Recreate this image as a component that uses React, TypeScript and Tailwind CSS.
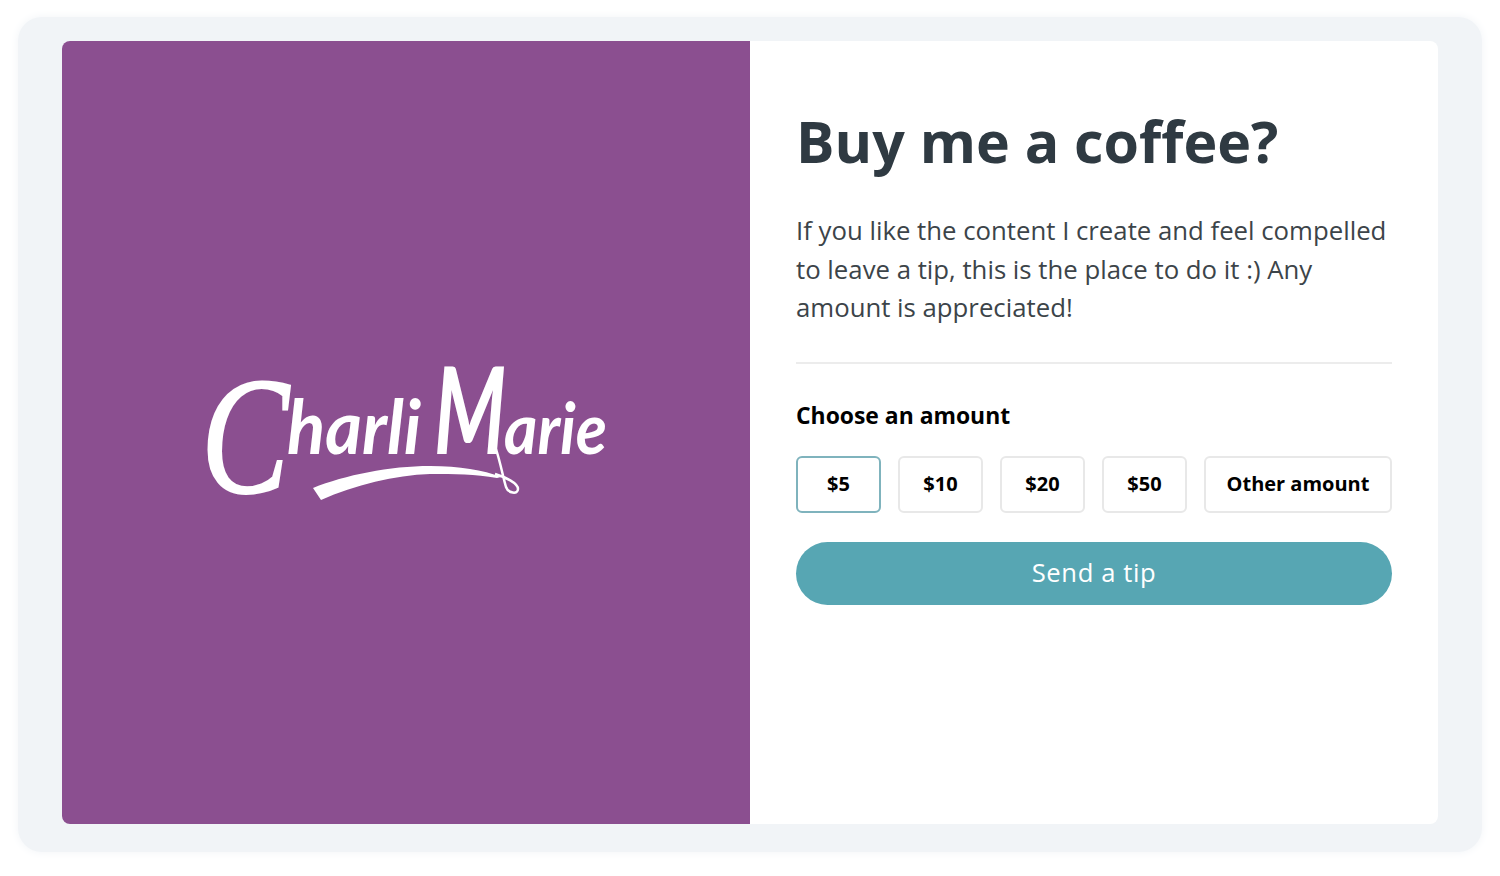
const amounts = ['$5', '$10', '$20', '$50'];

function Logo() {
  return (
    <svg width="402" height="220" viewBox="0 -42 402 220" fill="#fff" aria-label="Charli Marie">
      <text x="-4" y="127" fontSize="168" textLength="88" lengthAdjust="spacingAndGlyphs" stroke="#fff" strokeWidth="2" className="italic font-['Liberation_Serif',serif]">C</text>
      <text x="82" y="89" fontSize="74" textLength="134" lengthAdjust="spacingAndGlyphs" className="italic font-bold font-['Lato',sans-serif]">harli</text>
      <text x="229" y="89" fontSize="120" textLength="72" lengthAdjust="spacingAndGlyphs" className="italic font-bold font-['Lato',sans-serif]">M</text>
      <text x="299" y="89" fontSize="70" textLength="103" lengthAdjust="spacingAndGlyphs" className="italic font-bold font-['Lato',sans-serif]">arie</text>
      <path d="M108 123C140 110 185 101 225 101C255 101 278 105 296 112L292 113C270 109 250 109 225 109C190 110 150 120 116 135Z" />
      <path d="M290 109C300 112 313 118 313 124C313 130 303 128 301 122C298 112 296 100 291 84" fill="none" stroke="#fff" strokeWidth="2.5" />
    </svg>
  );
}

export default function App() {
  return (
    <div className="w-[1500px] h-[876px] bg-white pt-[17px] pl-[18px] font-['Open_Sans',sans-serif]">
      <div className="w-[1464px] h-[835px] bg-[#f1f4f7] rounded-[24px] shadow-[0_0_10px_#f1f4f7] pt-6 pl-11">
        <div className="w-[1376px] h-[783px] flex rounded-lg overflow-hidden bg-white">
          <div className="w-[688px] bg-[#8b4f90] flex items-center justify-center">
            <Logo />
          </div>
          <div className="flex-1 px-[46px] pt-[62px]">
            <h1 className="text-[57.3px] leading-[76px] font-bold text-[#2f3a42]">Buy me a coffee?</h1>
            <p className="mt-[32px] text-[25.76px] leading-[38.6px] text-[#3c4449]">
              If you like the content I create and feel compelled to leave a tip, this is the place to do it :) Any amount is appreciated!
            </p>
            <div className="mt-[35px] border-t-2 border-[#ececec]" />
            <h2 className="mt-[37px] text-[22.9px] leading-[30px] font-bold text-black">Choose an amount</h2>
            <div className="mt-[25px] flex gap-[17px]">
              {amounts.map((a, i) => (
                <button
                  key={a}
                  className={
                    i === 0
                      ? 'w-[85px] h-[57px] rounded-md border-2 border-[#7fb3bd] bg-white text-[20px] font-bold text-black'
                      : 'w-[85px] h-[57px] rounded-md border-2 border-[#e8e8e8] bg-white text-[20px] font-bold text-black'
                  }
                >
                  {a}
                </button>
              ))}
              <button className="flex-1 h-[57px] rounded-md border-2 border-[#e8e8e8] bg-white text-[20px] font-bold text-black">
                Other amount
              </button>
            </div>
            <button className="mt-[29px] w-full h-[63px] rounded-[32px] bg-[#57a6b3] text-white text-[25.6px] tracking-[0.6px]">
              Send a tip
            </button>
          </div>
        </div>
      </div>
    </div>
  );
}
